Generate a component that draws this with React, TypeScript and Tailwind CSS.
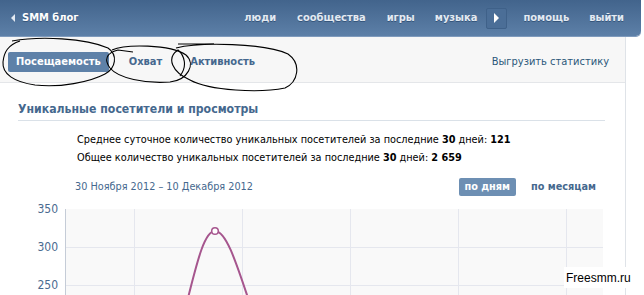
import React from "react";

const font = { fontFamily: '"DejaVu Sans Condensed", "DejaVu Sans", Tahoma, sans-serif' };

export default function App() {
  const vLines = [134, 242, 350, 458, 566];
  return (
    <div className="relative w-[644px] h-[295px] overflow-hidden bg-white" style={font}>
      {/* Header */}
      <div className="flex items-center h-[36px] w-[641px] rounded-br-[5px] bg-gradient-to-b from-[#42648c] to-[#5d80a8] shadow-[0_1px_0_#7f9bbd] text-[11px] font-bold text-[#e3eaf2] [text-shadow:0_1px_0_#35557b]">
        <div className="flex items-center pl-[11px]">
          <span className="w-0 h-0 border-y-[4px] border-y-transparent border-r-[4px] border-r-[#e3eaf2]" />
          <span className="ml-[7px] text-white">SMM блог</span>
        </div>
        <div className="flex items-center ml-auto pr-[17px]">
          <span>люди</span>
          <span className="ml-[21px]">сообщества</span>
          <span className="ml-[21px]">игры</span>
          <span className="ml-[20px]">музыка</span>
          <span className="ml-[9px] flex items-center justify-center w-[21px] h-[21px] rounded-[2px] bg-[#4b6e97] border border-[#3f6189]">
            <span className="w-0 h-0 border-y-[5px] border-y-transparent border-l-[5px] border-l-white" />
          </span>
          <span className="ml-[16px]">помощь</span>
          <span className="ml-[20px]">выйти</span>
        </div>
      </div>

      {/* Main column */}
      <div className="w-[626px] border-r border-[#dfe3e8] h-[259px] mt-px">
        {/* Tab bar */}
        <div className="flex items-center h-[46px] pt-[5px] bg-[#f7f7f7] border-b border-[#e4e6e9] pl-[8px] pr-[16px] text-[11px]">
          <span className="flex items-center h-[20px] px-[8px] rounded-[2px] bg-[#5e81a8] text-white font-bold">Посещаемость</span>
          <span className="ml-[20px] font-bold text-[#45688e]">Охват</span>
          <span className="ml-[28px] font-bold text-[#45688e]">Активность</span>
          <span className="ml-auto text-[#2b587a]">Выгрузить статистику</span>
        </div>

        {/* Content */}
        <div className="px-[18px] pt-[18px]">
          <div className="text-[12.2px] font-bold text-[#45688e] pb-[3px] border-b border-[#dae1e8] leading-[16px] mr-[2px]">
            Уникальные посетители и просмотры
          </div>
          <div className="pl-[59px] pt-[10px] text-[10.8px] text-black leading-[18px]">
            <div>
              Среднее суточное количество уникальных посетителей за последние <b>30</b> дней: <b>121</b>
            </div>
            <div>
              Общее количество уникальных посетителей за последние <b>30</b> дней: <b>2 659</b>
            </div>
          </div>
          <div className="flex items-center mt-[11px] text-[10.8px]">
            <span className="ml-[57px] text-[#45688e]">30 Ноября 2012 – 10 Декабря 2012</span>
            <span className="ml-auto flex items-center h-[18px] px-[6px] rounded-[2px] bg-[#6d8fb3] text-white font-bold">по дням</span>
            <span className="ml-[15px] mr-[11px] font-bold text-[#45688e]">по месяцам</span>
          </div>

          {/* Chart */}
          <div className="flex mt-[13px]">
            <div className="w-[41px] pr-[1px] flex flex-col items-end text-[12px] text-[#4a6a90] leading-[14px] -mt-[7px]">
              <span>350</span>
              <span className="mt-[24px]">300</span>
              <span className="mt-[24px]">250</span>
            </div>
            <div className="relative ml-[6px] w-[538px] h-[120px] bg-[#f9f9f9] border-l border-[#c5ccd7]">
              <div className="absolute left-0 right-0 top-[38px] h-px bg-[#e5e7ee]" />
              <div className="absolute left-0 right-0 top-[76px] h-px bg-[#e5e7ee]" />
              {vLines.map((x) => (
                <div key={x} className="absolute top-0 bottom-0 w-px bg-[#e5e7ee]" style={{ left: x - 66 }} />
              ))}
            </div>
          </div>
        </div>
      </div>

      {/* Curve */}
      <svg className="absolute left-0 top-0" width="644" height="295">
        <path d="M188,298 C198,258 205,231 215,231 C226,231 236,262 248,298" fill="none" stroke="#a6568e" strokeWidth="2" />
        <circle cx="215" cy="231" r="3.3" fill="#fff" stroke="#a6568e" strokeWidth="1.5" />
        {/* hand-drawn annotations */}
        <path d="M12,41 C40,36 85,38 108,48 C118,55 116,68 105,74 C90,82 60,88 35,85 C14,82 2,74 3,62 C4,52 8,45 20,41" fill="none" stroke="#000" strokeWidth="1.1" />
        <path d="M112,50 C125,44 170,44 186,55 C196,64 188,80 170,82 C145,84 118,78 110,68 C104,60 106,53 118,50 L133,52" fill="none" stroke="#000" strokeWidth="1.1" />
        <path d="M178,44 L214,44 M176,48 C200,42 265,43 288,54 C302,64 298,82 285,88 C260,93 210,91 190,80 C172,72 166,58 178,50 C184,55 188,66 180,76" fill="none" stroke="#000" strokeWidth="1.1" />
      </svg>

      {/* Watermark */}
      <div className="absolute left-[564px] top-[267px] w-[62px] h-[21px] bg-white flex items-center pl-[2px] text-[12px] text-black" style={{ fontFamily: '"Liberation Sans", Arial, sans-serif' }}>
        Freesmm.ru
      </div>
    </div>
  );
}
